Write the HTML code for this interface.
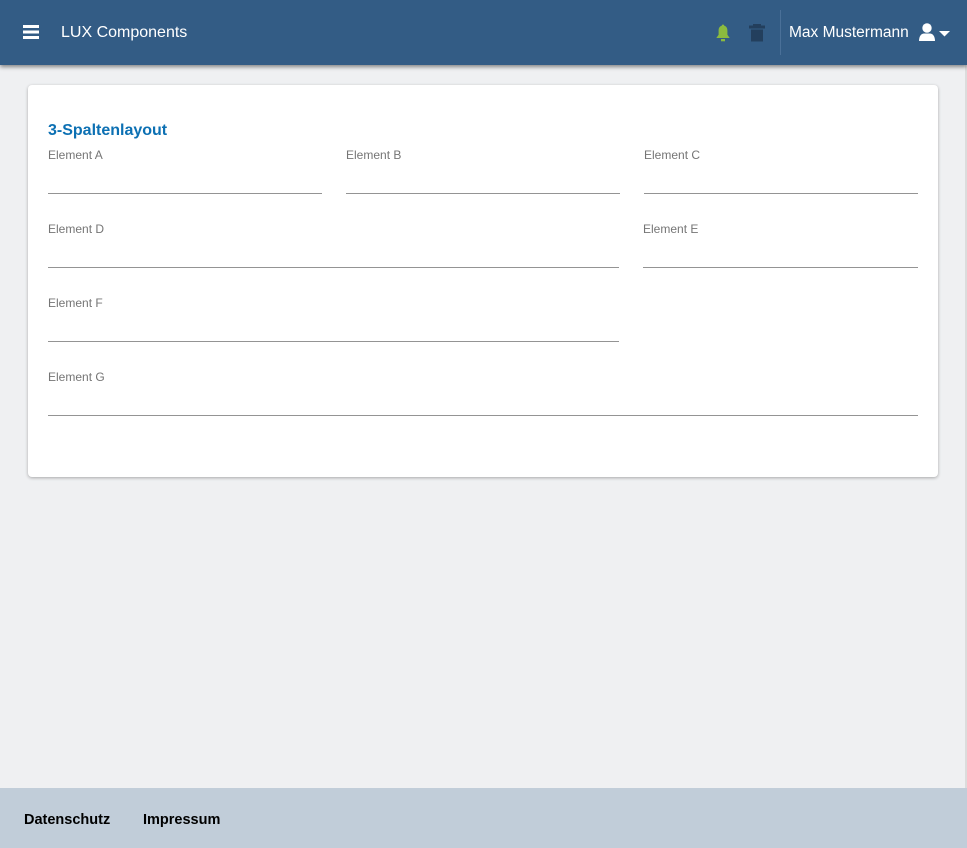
<!DOCTYPE html>
<html><head><meta charset="utf-8"><style>
*{margin:0;padding:0;box-sizing:border-box}
body{width:967px;height:848px;background:#eff0f2;font-family:"Liberation Sans",sans-serif;position:relative;overflow:hidden}
.hdr{position:absolute;left:0;top:0;width:967px;height:65px;background:#335c85;box-shadow:0 2px 4px rgba(0,0,0,.45);z-index:2}
.abs{position:absolute}
.card{position:absolute;left:28px;top:85px;width:910px;height:392px;background:#fff;border-radius:4px;box-shadow:0 1px 3px rgba(0,0,0,.3)}
.lbl{position:absolute;font-size:12px;color:#757575}
.ln{position:absolute;height:1px;background:#949494}
.ftr{position:absolute;left:0;top:788px;width:967px;height:60px;background:#c1cdd9}
.ftr span{position:absolute;top:24px;font-size:14.5px;font-weight:bold;color:#000}
.sb{position:absolute;right:0;top:65px;width:2px;height:723px;background:#dcdcdc}
</style></head><body>
<div class="hdr">
  <svg class="abs" style="left:23px;top:25px" width="16" height="14"><rect y="0" width="16" height="3" fill="#fff"/><rect y="5.5" width="16" height="3" fill="#fff"/><rect y="11" width="16" height="3" fill="#fff"/></svg>
  <div class="abs" style="left:61px;top:24px;font-size:16px;color:#fff">LUX Components</div>
  <svg class="abs" style="left:714px;top:24px" width="18" height="18" viewBox="0 0 18 18"><path d="M9 0.5c0.8 0 1.1 0.5 1.1 1.1c2.4 0.6 3.3 2.6 3.3 5v4.2l2.3 3.2H2.3l2.3-3.2V6.6c0-2.4 0.9-4.4 3.3-5C7.9 1 8.2 0.5 9 0.5z" fill="#8bbb3f"/><rect x="7" y="15" width="4" height="2.3" fill="#8bbb3f"/></svg>
  <svg class="abs" style="left:749px;top:24px" width="16" height="18" viewBox="0 0 16 18"><rect x="4" y="0" width="8" height="2" fill="#233f5d"/><rect x="0" y="1.5" width="16" height="3" fill="#233f5d"/><rect x="2" y="5.5" width="12" height="12" fill="#233f5d"/></svg>
  <div class="abs" style="left:780px;top:10px;width:1px;height:45px;background:#4a7098"></div>
  <div class="abs" style="left:789px;top:24px;font-size:15.5px;color:#fff">Max Mustermann</div>
  <svg class="abs" style="left:918px;top:23px" width="34" height="19" viewBox="0 0 34 19"><circle cx="9" cy="5" r="4.7" fill="#fff"/><path d="M1 18c0-5 2.5-7.5 5-7.5h6c2.5 0 5 2.5 5 7.5z" fill="#fff"/><path d="M21 8h11l-5.5 5.5z" fill="#fff"/></svg>
</div>
<div class="sb"></div>
<div class="card"></div>
<div class="abs" style="left:48px;top:122px;font-size:16px;font-weight:bold;color:#0c70b3">3-Spaltenlayout</div>
<div class="lbl" style="left:48px;top:148px">Element A</div><div class="ln" style="left:48px;top:193px;width:274px"></div>
<div class="lbl" style="left:346px;top:148px">Element B</div><div class="ln" style="left:346px;top:193px;width:274px"></div>
<div class="lbl" style="left:644px;top:148px">Element C</div><div class="ln" style="left:644px;top:193px;width:274px"></div>
<div class="lbl" style="left:48px;top:222px">Element D</div><div class="ln" style="left:48px;top:267px;width:571px"></div>
<div class="lbl" style="left:643px;top:222px">Element E</div><div class="ln" style="left:643px;top:267px;width:275px"></div>
<div class="lbl" style="left:48px;top:296px">Element F</div><div class="ln" style="left:48px;top:341px;width:571px"></div>
<div class="lbl" style="left:48px;top:370px">Element G</div><div class="ln" style="left:48px;top:415px;width:870px"></div>
<div class="ftr"><span style="left:24px">Datenschutz</span><span style="left:143px">Impressum</span></div>
</body></html>
